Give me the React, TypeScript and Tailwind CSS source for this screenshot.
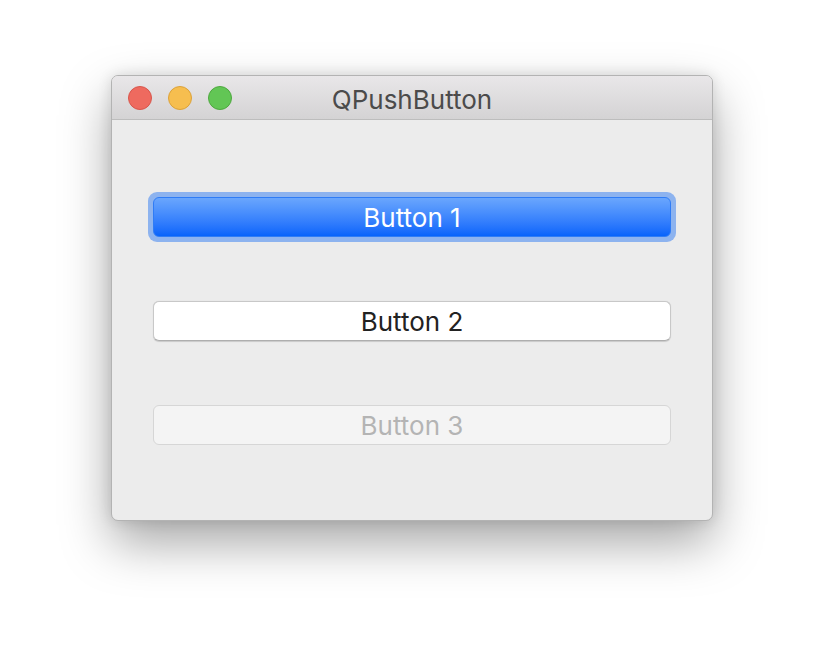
export default function App() {
  return (
    <div className="w-[824px] h-[668px] bg-white pt-[75px] pl-[111px]" style={{ fontFamily: "Inter, 'Liberation Sans', sans-serif" }}>
      <div className="w-[602px] h-[446px] rounded-[7px] border border-[#b3b3b3] bg-[#ececec] flex flex-col overflow-hidden shadow-[0_22px_50px_rgba(0,0,0,0.35),0_0_14px_rgba(0,0,0,0.12)]">
        {/* title bar */}
        <div className="h-[44px] shrink-0 relative flex items-center border-b border-[#bdbdbd] bg-gradient-to-b from-[#e9e7e9] to-[#d4d3d4]">
          <div className="flex items-center gap-[16px] pl-[16px]">
            <span className="w-[24px] h-[24px] rounded-full bg-[#ee6a5f] border border-[#d8564c]" />
            <span className="w-[24px] h-[24px] rounded-full bg-[#f6be4f] border border-[#dca23a]" />
            <span className="w-[24px] h-[24px] rounded-full bg-[#62c655] border border-[#4ea83f]" />
          </div>
          <div className="absolute inset-0 flex items-center justify-center pt-[3px] text-[26px] text-[#4b4b4b] pointer-events-none">
            QPushButton
          </div>
        </div>
        {/* body */}
        <div className="flex flex-col px-[41px] pt-[77px] gap-[64px]">
          <div className="rounded-[9px] p-[5px] -m-[5px] bg-[#8db3ef]">
            <div className="h-[40px] pt-[1px] rounded-[6px] border border-[#2f7cf6] bg-gradient-to-b from-[#6aa6fd] to-[#0563fb] flex items-center justify-center text-white text-[26px]">
              Button 1
            </div>
          </div>
          <div className="h-[40px] pt-[1px] rounded-[6px] bg-white border border-[#c8c8c8] border-b-[#aeaeae] shadow-[0_0.5px_1px_rgba(0,0,0,0.15)] flex items-center justify-center text-[#222] text-[26px]">
            Button 2
          </div>
          <div className="h-[40px] pt-[1px] rounded-[6px] bg-[#f4f4f4] border border-[#d6d6d6] flex items-center justify-center text-[#b4b4b4] text-[26px]">
            Button 3
          </div>
        </div>
      </div>
    </div>
  );
}
